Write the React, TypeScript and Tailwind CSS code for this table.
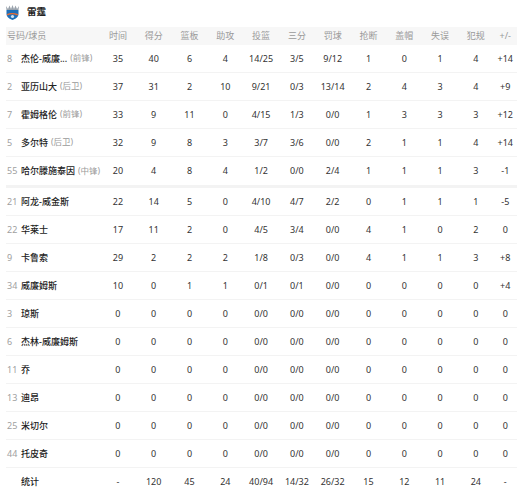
import React from "react";

type Row = { no?: string; name: string; pos?: string; s: string[] };

const starters: Row[] = [
  { no: "8", name: "杰伦-威廉...", pos: "(前锋)", s: ["35", "40", "6", "4", "14/25", "3/5", "9/12", "1", "0", "1", "4", "+14"] },
  { no: "2", name: "亚历山大", pos: "(后卫)", s: ["37", "31", "2", "10", "9/21", "0/3", "13/14", "2", "4", "3", "4", "+9"] },
  { no: "7", name: "霍姆格伦", pos: "(前锋)", s: ["33", "9", "11", "0", "4/15", "1/3", "0/0", "1", "3", "3", "3", "+12"] },
  { no: "5", name: "多尔特", pos: "(后卫)", s: ["32", "9", "8", "3", "3/7", "3/6", "0/0", "2", "1", "1", "4", "+14"] },
  { no: "55", name: "哈尔滕施泰因", pos: "(中锋)", s: ["20", "4", "8", "4", "1/2", "0/0", "2/4", "1", "1", "1", "3", "-1"] },
];

const zeros = ["0", "0", "0", "0", "0/0", "0/0", "0/0", "0", "0", "0", "0", "0"];

const bench: Row[] = [
  { no: "21", name: "阿龙-威金斯", s: ["22", "14", "5", "0", "4/10", "4/7", "2/2", "0", "1", "1", "1", "-5"] },
  { no: "22", name: "华莱士", s: ["17", "11", "2", "0", "4/5", "3/4", "0/0", "4", "1", "0", "2", "0"] },
  { no: "9", name: "卡鲁索", s: ["29", "2", "2", "2", "1/8", "0/3", "0/0", "4", "1", "1", "3", "+8"] },
  { no: "34", name: "威廉姆斯", s: ["10", "0", "1", "1", "0/1", "0/1", "0/0", "0", "0", "0", "0", "+4"] },
  { no: "3", name: "琼斯", s: zeros },
  { no: "6", name: "杰林-威廉姆斯", s: zeros },
  { no: "11", name: "乔", s: zeros },
  { no: "13", name: "迪昂", s: zeros },
  { no: "25", name: "米切尔", s: zeros },
  { no: "44", name: "托皮奇", s: zeros },
  { name: "统计", s: ["-", "120", "45", "24", "40/94", "14/32", "26/32", "15", "12", "11", "24", "-"] },
];

const heads = ["时间", "得分", "篮板", "助攻", "投篮", "三分", "罚球", "抢断", "盖帽", "失误", "犯规", "+/-"];

function Cells({ vals, head }: { vals: string[]; head?: boolean }) {
  return (
    <>
      {vals.map((v, i) => (
        <div
          key={i}
          className={
            (i === vals.length - 1 ? "w-[23px] " : "w-[35.8px] ") +
            "shrink-0 text-center whitespace-nowrap " +
            (head ? "text-[#9a9a9a]" : "text-[#333]")
          }
        >
          {v}
        </div>
      ))}
    </>
  );
}

function DataRow({ r, last }: { r: Row; last?: boolean }) {
  return (
    <div className={"flex h-[28px] items-center " + (last ? "" : "border-b border-[#f3f3f3]")}>
      <div className="flex w-[94px] shrink-0 items-center whitespace-nowrap">
        <span className="w-[15px] shrink-0 pl-[1px] text-[#a0a0a0]">{r.no ?? ""}</span>
        <span className="text-[#222] font-medium">{r.name}</span>
        {r.pos && <span className="ml-[3px] text-[8.5px] text-[#9a9a9a]">{r.pos}</span>}
      </div>
      <Cells vals={r.s} />
    </div>
  );
}

function Logo() {
  return (
    <svg width="17" height="17" viewBox="0 0 17 17">
      <path d="M2 2 L4 5 L5.5 1.5 L7 5 L8.5 1 L10 5 L11.5 1.5 L13 5 L15 2 L14.5 6 L2.5 6 Z" fill="#9aa3ad" />
      <path d="M2.5 6 H14.5 V10 C14.5 13 11.5 15 8.5 16 C5.5 15 2.5 13 2.5 10 Z" fill="#1d6fb8" />
      <path d="M3 10 C6 8.5 10 8.5 14 10 L13.6 11.4 C10 10 6.5 10 3.4 11.4 Z" fill="#ef6b2e" />
      <circle cx="8.5" cy="12.5" r="1.6" fill="#fff" opacity="0.8" />
    </svg>
  );
}

export default function App() {
  return (
    <div
      className="w-[523px] h-[497px] bg-white text-[9px] overflow-hidden"
      style={{ fontFamily: '"Noto Sans", "Noto Sans CJK SC", sans-serif' }}
    >
      <div className="flex h-[27px] items-center gap-[6px] pl-[4px] pb-[3px]">
        <Logo />
        <span className="text-[9.5px] font-bold text-[#222]">雷霆</span>
      </div>
      <div className="mx-[6px] w-[511px]">
        <div className="flex h-[18px] items-center bg-[#f7f7f7]">
          <div className="w-[94px] shrink-0 pl-[1px] text-[#9a9a9a]">号码/球员</div>
          <Cells vals={heads} head />
        </div>
        {starters.map((r, i) => (
          <DataRow key={i} r={r} last={i === starters.length - 1} />
        ))}
        <div className="h-[3px] bg-[#f3f3f3]" />
        {bench.map((r, i) => (
          <DataRow key={i} r={r} last={i === bench.length - 1} />
        ))}
      </div>
    </div>
  );
}
